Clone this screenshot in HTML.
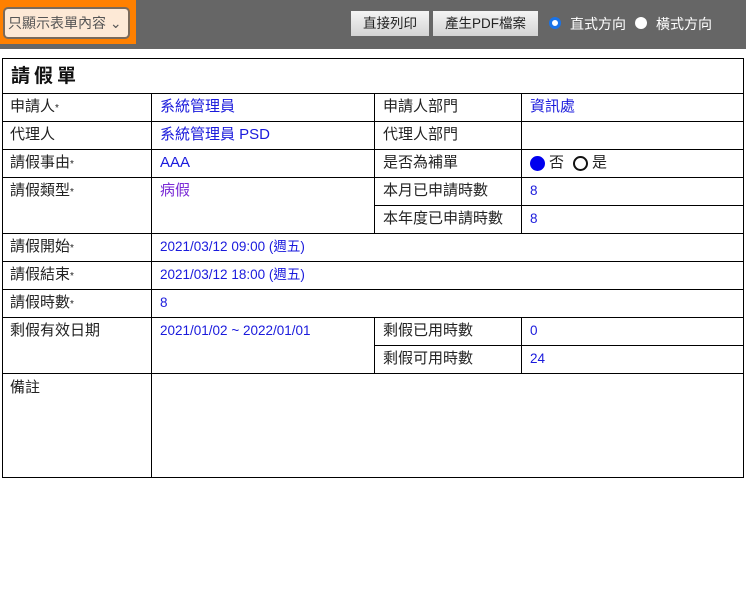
<!DOCTYPE html><html><head><meta charset="utf-8"><style>
body{margin:0;width:746px;height:607px;background:#fff;font-family:"Liberation Sans","Noto Sans CJK TC",sans-serif;position:relative;overflow:hidden}
.bar{position:absolute;left:0;top:0;width:746px;height:49px;background:#666}
.sel{position:absolute;left:0;top:0;width:136px;height:44px;background:#ff8000}
.sel div{position:absolute;left:5px;top:9px;width:123px;height:28px;background:#fde9d6;border-radius:3px;font-size:14px;color:#555;line-height:28px;padding-left:3px;box-sizing:border-box;box-shadow:0 0 0 2px #7a6a5a}
.btn{position:absolute;top:11px;height:25px;background:linear-gradient(#f4f4f4,#d4d4d4);font-size:13.5px;line-height:25px;text-align:center;color:#222}
.rad{position:absolute;top:17px;width:12px;height:12px;border-radius:50%;background:#fff;box-sizing:border-box}
.rl{position:absolute;top:14px;color:#fff;font-size:14px}
.h{position:absolute;background:#000;height:1px}
.v{position:absolute;background:#000;width:1px}
.t{position:absolute;font-size:15px;color:#222;white-space:nowrap;line-height:18px;margin-top:-1px}
.b{color:#1a1adc}
.s{font-size:13.5px}
</style></head><body>
<div class="bar"></div>
<div class="sel"><div>只顯示表單內容 ⌄</div></div>
<div class="btn" style="left:351px;width:78px">直接列印</div>
<div class="btn" style="left:433px;width:105px">產生PDF檔案</div>
<div class="rad" style="left:549px;border:3px solid #1a73e8"></div>
<div class="rl" style="left:570px">直式方向</div>
<div class="rad" style="left:635px"></div>
<div class="rl" style="left:656px">橫式方向</div>

<div class="h" style="left:2px;width:742px;top:58px"></div>
<div class="h" style="left:2px;width:742px;top:93px"></div>
<div class="h" style="left:2px;width:742px;top:121px"></div>
<div class="h" style="left:2px;width:742px;top:149px"></div>
<div class="h" style="left:2px;width:742px;top:177px"></div>
<div class="h" style="left:374px;width:370px;top:205px"></div>
<div class="h" style="left:2px;width:742px;top:233px"></div>
<div class="h" style="left:2px;width:742px;top:261px"></div>
<div class="h" style="left:2px;width:742px;top:289px"></div>
<div class="h" style="left:2px;width:742px;top:317px"></div>
<div class="h" style="left:374px;width:370px;top:345px"></div>
<div class="h" style="left:2px;width:742px;top:373px"></div>
<div class="h" style="left:2px;width:742px;top:477px"></div>
<div class="v" style="left:2px;top:58px;height:420px"></div>
<div class="v" style="left:743px;top:58px;height:420px"></div>
<div class="v" style="left:151px;top:93px;height:385px"></div>
<div class="v" style="left:374px;top:93px;height:140px"></div>
<div class="v" style="left:521px;top:93px;height:140px"></div>
<div class="v" style="left:374px;top:317px;height:56px"></div>
<div class="v" style="left:521px;top:317px;height:56px"></div>

<div class="t" style="left:11px;top:66px;font-size:19px;line-height:24px;font-weight:bold;letter-spacing:4px;color:#111">請假單</div>
<div class="t" style="left:10px;top:99px">申請人<span style="font-size:10px">*</span></div>
<div class="t b" style="left:160px;top:99px">系統管理員</div>
<div class="t" style="left:383px;top:99px">申請人部門</div>
<div class="t b" style="left:530px;top:99px">資訊處</div>
<div class="t" style="left:10px;top:127px">代理人</div>
<div class="t b" style="left:160px;top:127px">系統管理員 PSD</div>
<div class="t" style="left:383px;top:127px">代理人部門</div>
<div class="t" style="left:10px;top:155px">請假事由<span style="font-size:10px">*</span></div>
<div class="t b" style="left:160px;top:155px">AAA</div>
<div class="t" style="left:383px;top:155px">是否為補單</div>
<div style="position:absolute;left:530px;top:156px;width:15px;height:15px;border-radius:50%;background:#0000ee"></div>
<div class="t" style="left:549px;top:155px">否</div>
<div style="position:absolute;left:573px;top:156px;width:15px;height:15px;border-radius:50%;border:2px solid #111;box-sizing:border-box"></div>
<div class="t" style="left:592px;top:155px">是</div>
<div class="t" style="left:10px;top:183px">請假類型<span style="font-size:10px">*</span></div>
<div class="t" style="left:160px;top:183px;color:#7a2ad6">病假</div>
<div class="t" style="left:383px;top:183px">本月已申請時數</div>
<div class="t b s" style="left:530px;top:183px">8</div>
<div class="t" style="left:383px;top:211px">本年度已申請時數</div>
<div class="t b s" style="left:530px;top:211px">8</div>
<div class="t" style="left:10px;top:239px">請假開始<span style="font-size:10px">*</span></div>
<div class="t b s" style="left:160px;top:239px">2021/03/12 09:00 (週五)</div>
<div class="t" style="left:10px;top:267px">請假結束<span style="font-size:10px">*</span></div>
<div class="t b s" style="left:160px;top:267px">2021/03/12 18:00 (週五)</div>
<div class="t" style="left:10px;top:295px">請假時數<span style="font-size:10px">*</span></div>
<div class="t b s" style="left:160px;top:295px">8</div>
<div class="t" style="left:10px;top:323px">剩假有效日期</div>
<div class="t b s" style="left:160px;top:323px">2021/01/02 ~ 2022/01/01</div>
<div class="t" style="left:383px;top:323px">剩假已用時數</div>
<div class="t b s" style="left:530px;top:323px">0</div>
<div class="t" style="left:383px;top:351px">剩假可用時數</div>
<div class="t b s" style="left:530px;top:351px">24</div>
<div class="t" style="left:10px;top:380px">備註</div>
</body></html>
